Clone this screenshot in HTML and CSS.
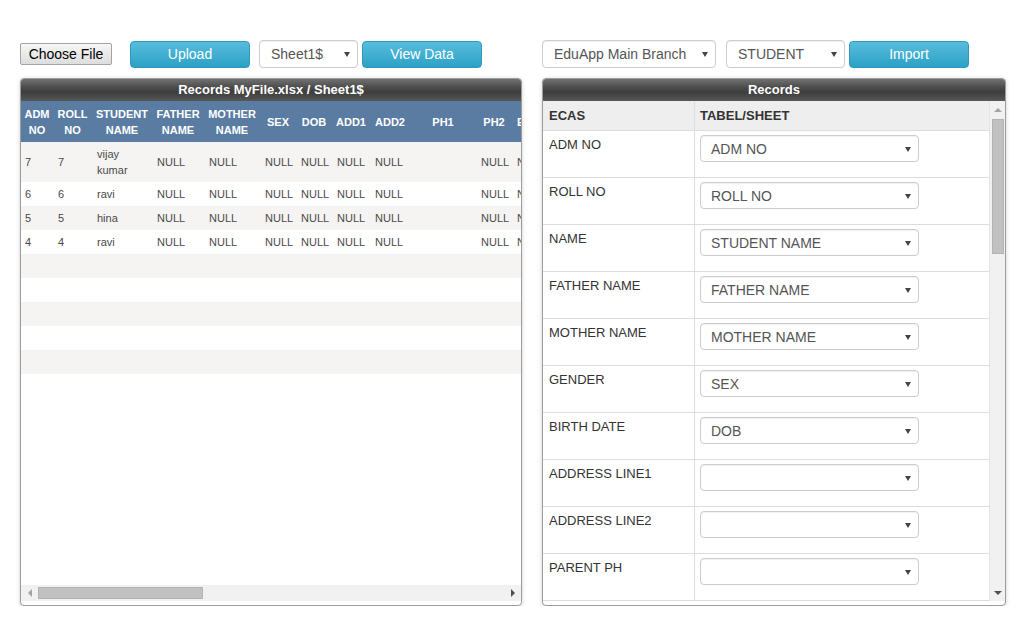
FILE: index.html
```html
<!DOCTYPE html>
<html>
<head>
<meta charset="utf-8">
<title>Import</title>
<link rel="stylesheet" href="styles.css">
</head>
<body>
<div class="page">
  <section class="col col-left">
    <div class="toolbar">
      <button class="file-btn">Choose File</button>
      <button class="btn upload">Upload</button>
      <div class="select sheet-select"><span>Sheet1$</span><i class="caret"></i></div>
      <button class="btn">View Data</button>
    </div>
    <div class="panel panel-left">
      <div class="panel-title">Records MyFile.xlsx / Sheet1$</div>
      <div class="grid">
        <table class="data">
          <colgroup>
            <col class="w32"><col class="w39"><col class="w60"><col class="w52"><col class="w56"><col class="w36"><col class="w36"><col class="w38"><col class="w40"><col class="w66"><col class="w36"><col class="w44">
          </colgroup>
          <thead>
            <tr><th>ADM<br>NO</th><th>ROLL<br>NO</th><th>STUDENT<br>NAME</th><th>FATHER<br>NAME</th><th>MOTHER<br>NAME</th><th>SEX</th><th>DOB</th><th>ADD1</th><th>ADD2</th><th>PH1</th><th>PH2</th><th>EMAIL</th></tr>
          </thead>
          <tbody>
            <tr><td>7</td><td>7</td><td>vijay kumar</td><td>NULL</td><td>NULL</td><td>NULL</td><td>NULL</td><td>NULL</td><td>NULL</td><td></td><td>NULL</td><td>NULL</td></tr>
            <tr><td>6</td><td>6</td><td>ravi</td><td>NULL</td><td>NULL</td><td>NULL</td><td>NULL</td><td>NULL</td><td>NULL</td><td></td><td>NULL</td><td>NULL</td></tr>
            <tr><td>5</td><td>5</td><td>hina</td><td>NULL</td><td>NULL</td><td>NULL</td><td>NULL</td><td>NULL</td><td>NULL</td><td></td><td>NULL</td><td>NULL</td></tr>
            <tr><td>4</td><td>4</td><td>ravi</td><td>NULL</td><td>NULL</td><td>NULL</td><td>NULL</td><td>NULL</td><td>NULL</td><td></td><td>NULL</td><td>NULL</td></tr>
            <tr class="empty"><td colspan="12"></td></tr>
            <tr class="empty"><td colspan="12"></td></tr>
            <tr class="empty"><td colspan="12"></td></tr>
            <tr class="empty"><td colspan="12"></td></tr>
            <tr class="empty"><td colspan="12"></td></tr>
          </tbody>
        </table>
      </div>
      <div class="hscroll">
        <div class="hs-btn"><i class="arr-left"></i></div>
        <div class="hs-thumb"></div>
        <div class="hs-track"></div>
        <div class="hs-btn"><i class="arr-right"></i></div>
      </div>
    </div>
  </section>

  <section class="col col-right">
    <div class="toolbar">
      <div class="select branch-select"><span>EduApp Main Branch</span><i class="caret"></i></div>
      <div class="select type-select"><span>STUDENT</span><i class="caret"></i></div>
      <button class="btn">Import</button>
    </div>
    <div class="panel panel-right">
      <div class="panel-title">Records</div>
      <div class="map-body">
        <div class="map">
          <div class="map-row map-head"><div class="mc">ECAS</div><div class="mc mc2">TABEL/SHEET</div></div>
          <div class="map-row"><div class="mc">ADM NO</div><div class="mc mc2"><div class="select msel"><span>ADM NO</span><i class="caret"></i></div></div></div>
          <div class="map-row"><div class="mc">ROLL NO</div><div class="mc mc2"><div class="select msel"><span>ROLL NO</span><i class="caret"></i></div></div></div>
          <div class="map-row"><div class="mc">NAME</div><div class="mc mc2"><div class="select msel"><span>STUDENT NAME</span><i class="caret"></i></div></div></div>
          <div class="map-row"><div class="mc">FATHER NAME</div><div class="mc mc2"><div class="select msel"><span>FATHER NAME</span><i class="caret"></i></div></div></div>
          <div class="map-row"><div class="mc">MOTHER NAME</div><div class="mc mc2"><div class="select msel"><span>MOTHER NAME</span><i class="caret"></i></div></div></div>
          <div class="map-row"><div class="mc">GENDER</div><div class="mc mc2"><div class="select msel"><span>SEX</span><i class="caret"></i></div></div></div>
          <div class="map-row"><div class="mc">BIRTH DATE</div><div class="mc mc2"><div class="select msel"><span>DOB</span><i class="caret"></i></div></div></div>
          <div class="map-row"><div class="mc">ADDRESS LINE1</div><div class="mc mc2"><div class="select msel"><span></span><i class="caret"></i></div></div></div>
          <div class="map-row"><div class="mc">ADDRESS LINE2</div><div class="mc mc2"><div class="select msel"><span></span><i class="caret"></i></div></div></div>
          <div class="map-row"><div class="mc">PARENT PH</div><div class="mc mc2"><div class="select msel"><span></span><i class="caret"></i></div></div></div>
          <div class="map-row"><div class="mc"></div><div class="mc mc2"></div></div>
        </div>
        <div class="vscroll">
          <div class="vs-btn"><i class="arr-up"></i></div>
          <div class="vs-thumb"></div>
          <div class="vs-track"></div>
          <div class="vs-btn"><i class="arr-down"></i></div>
        </div>
      </div>
    </div>
  </section>
</div>
</body>
</html>
```

FILE: styles.css
```css
* { box-sizing: border-box; }
html, body { margin: 0; background: #fff; }
body { font-family: "Liberation Sans", Arial, sans-serif; color: #333; }

.page { display: flex; gap: 20px; padding: 40px 0 0 20px; }
.col-left { width: 502px; }
.col-right { width: 464px; }

.toolbar { display: flex; align-items: center; height: 28px; margin-bottom: 10px; }

.file-btn {
  width: 92px; height: 22px; margin-right: 18px; padding: 0;
  font: 14px "Liberation Sans", Arial, sans-serif; color: #000;
  background: linear-gradient(#f7f7f7, #dddddd);
  border: 1px solid #a3a3a3; border-radius: 2px;
}
.btn {
  width: 120px; height: 27px; padding: 0;
  font: 14px "Liberation Sans", Arial, sans-serif; color: #fff;
  background: linear-gradient(#58bddc, #2ca1c6);
  border: 1px solid #2a9bbf; border-radius: 4px;
}
.upload { margin-right: 9px; }

.select {
  display: flex; align-items: center; justify-content: space-between;
  height: 28px; padding: 0 7px 0 11px;
  background: #fff; border: 1px solid #ccc; border-radius: 4px;
  font-size: 14px; color: #555;
  box-shadow: inset 0 1px 1px rgba(0,0,0,.06);
}
.caret {
  width: 0; height: 0; margin-top: 1px;
  border-left: 3.5px solid transparent; border-right: 3.5px solid transparent;
  border-top: 5px solid #444;
}
.sheet-select { width: 99px; margin-right: 4px; }
.branch-select { width: 174px; margin-right: 10px; }
.type-select { width: 119px; margin-right: 4px; }

.panel {
  height: 528px; display: flex; flex-direction: column; overflow: hidden;
  background: #fff; border: 1px solid #9c9c9c; border-radius: 4px;
  box-shadow: 0 1px 4px rgba(0,0,0,.18);
}
.panel-left { padding-bottom: 4px; }
.panel-right { padding-bottom: 4px; }
.panel-title {
  flex: none; height: 22px; line-height: 22px; text-align: center;
  color: #fff; font-weight: bold; font-size: 13px;
  background: linear-gradient(#717171 0%, #4a4a4a 40%, #3d3d3d 60%, #575757 100%);
}

/* left grid */
.grid { flex: 1; overflow: hidden; }
.data { table-layout: fixed; width: 535px; border-collapse: collapse; }
.w32 { width: 32px; } .w36 { width: 36px; } .w38 { width: 38px; } .w39 { width: 39px; }
.w40 { width: 40px; } .w44 { width: 44px; } .w52 { width: 52px; } .w56 { width: 56px; }
.w60 { width: 60px; } .w66 { width: 66px; }
.data th {
  height: 41px; padding: 0 1px; background: #5a7ca3; color: #fff;
  font-size: 11px; font-weight: bold; line-height: 16px; text-align: center; vertical-align: middle;
  white-space: nowrap;
}
.data td {
  padding: 4px 5px; font-size: 11px; line-height: 16px; color: #4a4a4a;
  vertical-align: middle; white-space: normal; overflow: hidden;
}
.data td:first-child { padding-left: 4px; }
.data tbody tr:nth-child(odd) { background: #f5f4f2; }
.data tr.empty td { height: 24px; }

.hscroll { flex: none; height: 16px; display: flex; align-items: center; background: #f1f1f1; }
.hs-btn { width: 17px; height: 16px; display: flex; align-items: center; justify-content: center; }
.hs-thumb { width: 165px; height: 12px; background: #c1c1c1; border: 1px solid #b3b3b3; }
.hs-track { flex: 1; }
.arr-left { width: 0; height: 0; border-top: 4px solid transparent; border-bottom: 4px solid transparent; border-right: 4px solid #a3a3a3; }
.arr-right { width: 0; height: 0; border-top: 4px solid transparent; border-bottom: 4px solid transparent; border-left: 4px solid #505050; }

/* right mapping */
.map-body { flex: none; height: 500px; display: flex; }
.map { flex: 1; overflow: hidden; }
.map-row {
  display: grid; grid-template-columns: 151px 1fr; height: 47px;
  border-top: 1px solid #dddddd; font-size: 13px; line-height: 18px; color: #333;
}
.map-row.map-head { height: 29px; border-top: 0; background: #eeeeee; font-weight: bold; }
.map-head .mc { padding: 0 6px; display: flex; align-items: center; }
.mc { padding: 5px 6px 0; }
.mc2 { border-left: 1px solid #dddddd; padding: 4px 5px 0; }
.map-head .mc2 { padding-left: 5px; }
.msel { width: 219px; height: 27px; padding: 0 7px 0 10px; }

.vscroll { width: 16px; flex: none; display: flex; flex-direction: column; align-items: center; background: #f1f1f1; border-left: 1px solid #e4e4e4; }
.vs-btn { height: 17px; width: 16px; display: flex; align-items: center; justify-content: center; flex: none; }
.vs-thumb { width: 12px; height: 135px; margin-top: 1px; background: #c1c1c1; border: 1px solid #b3b3b3; flex: none; }
.vs-track { flex: 1; }
.arr-up { width: 0; height: 0; border-left: 4px solid transparent; border-right: 4px solid transparent; border-bottom: 4px solid #a3a3a3; }
.arr-down { width: 0; height: 0; border-left: 4px solid transparent; border-right: 4px solid transparent; border-top: 4px solid #505050; }
```
